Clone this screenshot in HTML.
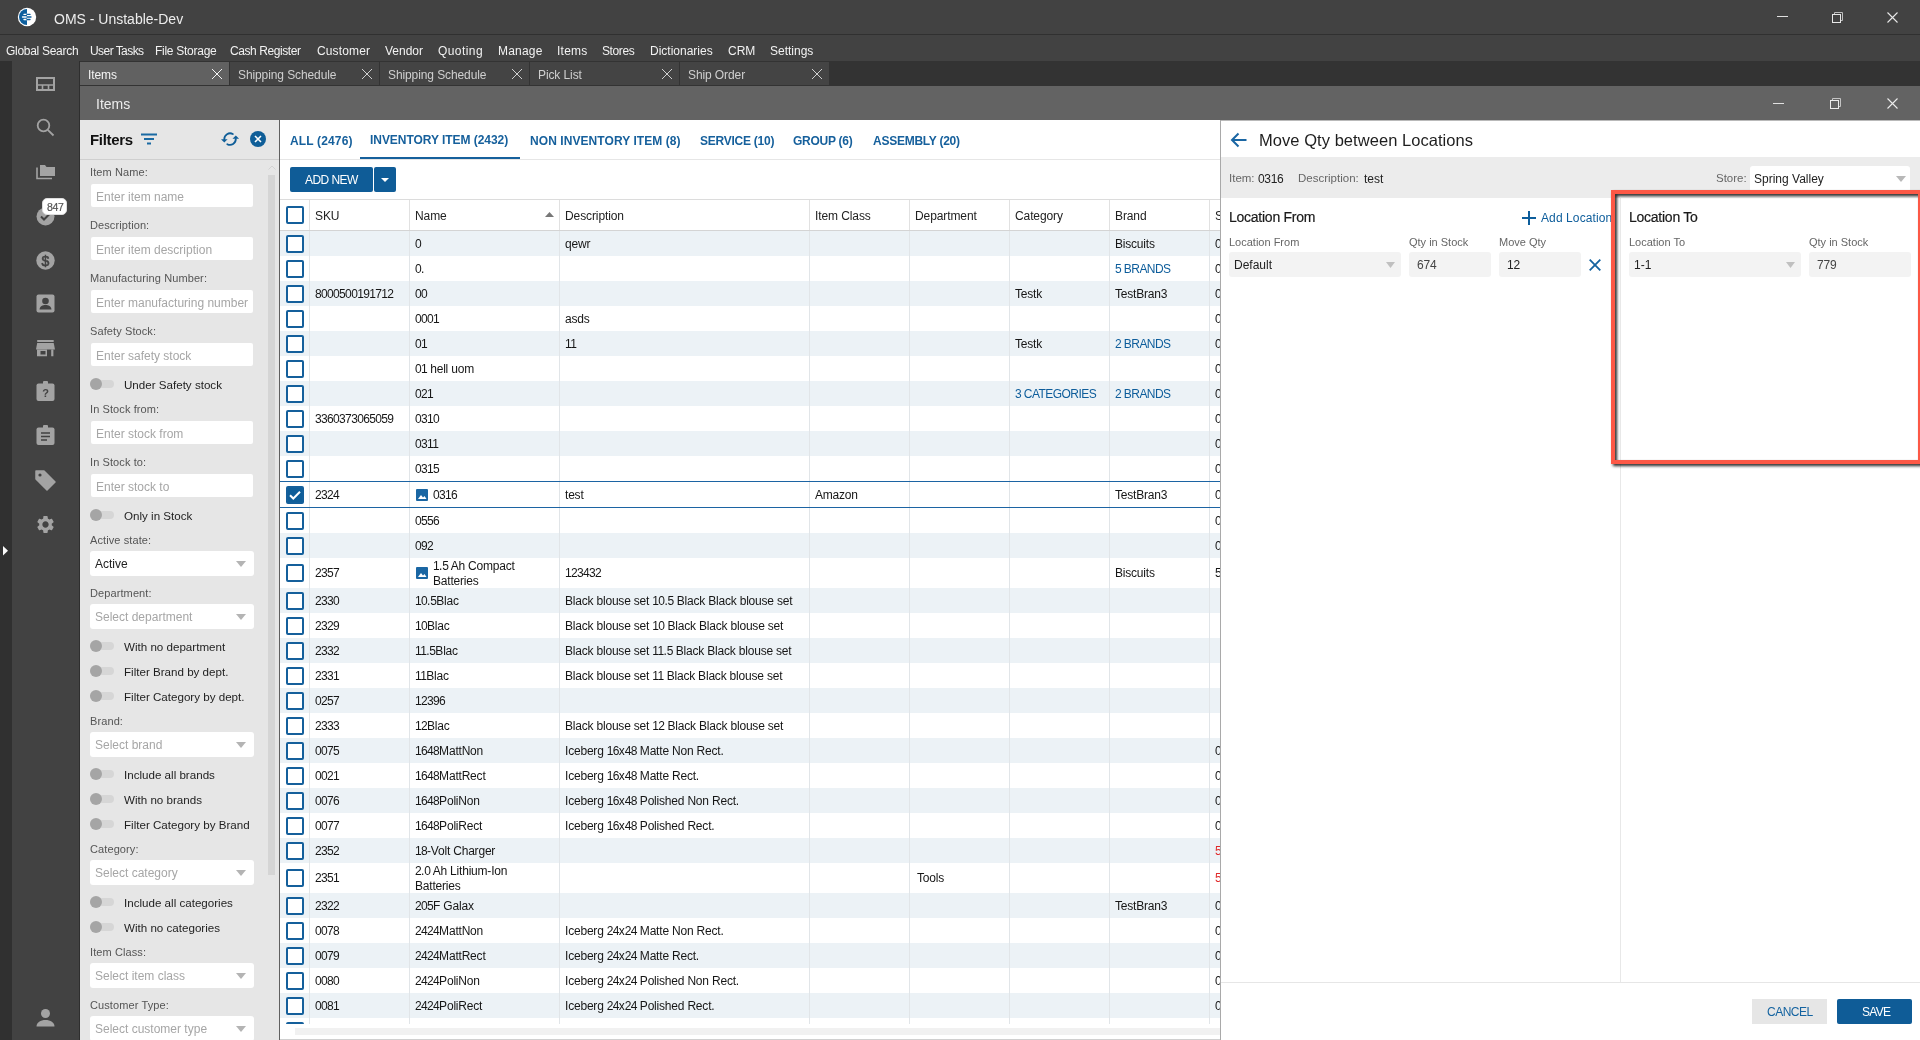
<!DOCTYPE html>
<html><head><meta charset="utf-8"><title>OMS</title>
<style>
*{box-sizing:border-box;margin:0;padding:0}
html,body{width:1920px;height:1040px;overflow:hidden;background:#3f3f3f;font-family:"Liberation Sans", sans-serif;}
.ab{position:absolute}
.t{position:absolute;white-space:nowrap;line-height:1}
svg{position:absolute;overflow:visible}
</style></head><body>
<div style="position:absolute;left:0;top:0;width:1920px;height:1040px;will-change:transform;overflow:hidden">

<div class="ab" style="left:0;top:0;width:1920px;height:34px;background:#424242"></div>
<div class="ab" style="left:0;top:34px;width:1920px;height:1px;background:#303030"></div>
<svg style="left:17px;top:7px" width="20" height="20" viewBox="0 0 20 20">
<circle cx="10" cy="10" r="9.2" fill="#ffffff"/>
<path d="M10 2 A8 8 0 0 0 10 18 Z" fill="#0d5f9e"/>
<path d="M7 7.4h3M7 12.5h3M5.5 10h4.5" stroke="#ffffff" stroke-width="1.3" stroke-linecap="round"/>
<path d="M10 7.4h3M10 12.5h3M10 10h4" stroke="#0d5f9e" stroke-width="1.3" stroke-linecap="round"/>
</svg>
<div class="t" style="left:54px;top:12px;font-size:14px;color:#ededed">OMS - Unstable-Dev</div>
<div class="ab" style="left:1777px;top:16px;width:11px;height:1px;background:#e0e0e0"></div>
<svg style="left:1832px;top:12px" width="11" height="11" viewBox="0 0 11 11">
<path d="M2.5 2.5V0.5h8v8h-2" fill="none" stroke="#bdbdbd" stroke-width="1"/>
<rect x="0.5" y="2.5" width="8" height="8" fill="none" stroke="#e8e8e8" stroke-width="1"/>
</svg>
<svg style="left:1887px;top:12px" width="11" height="11" viewBox="0 0 11 11">
<path d="M0.5 0.5L10.5 10.5M10.5 0.5L0.5 10.5" stroke="#e8e8e8" stroke-width="1.1"/>
</svg>
<div class="ab" style="left:0;top:35px;width:1920px;height:26px;background:#424242"></div>
<div class="t" style="left:6px;top:45px;font-size:12px;color:#f2f2f2;letter-spacing:-0.29px">Global Search</div>
<div class="t" style="left:90px;top:45px;font-size:12px;color:#f2f2f2;letter-spacing:-0.56px">User Tasks</div>
<div class="t" style="left:155px;top:45px;font-size:12px;color:#f2f2f2;letter-spacing:-0.27px">File Storage</div>
<div class="t" style="left:230px;top:45px;font-size:12px;color:#f2f2f2;letter-spacing:-0.42px">Cash Register</div>
<div class="t" style="left:317px;top:45px;font-size:12px;color:#f2f2f2;letter-spacing:0.14px">Customer</div>
<div class="t" style="left:385px;top:45px;font-size:12px;color:#f2f2f2;letter-spacing:0.0px">Vendor</div>
<div class="t" style="left:438px;top:45px;font-size:12px;color:#f2f2f2;letter-spacing:0.42px">Quoting</div>
<div class="t" style="left:498px;top:45px;font-size:12px;color:#f2f2f2;letter-spacing:0.2px">Manage</div>
<div class="t" style="left:557px;top:45px;font-size:12px;color:#f2f2f2;letter-spacing:0.25px">Items</div>
<div class="t" style="left:602px;top:45px;font-size:12px;color:#f2f2f2;letter-spacing:-0.4px">Stores</div>
<div class="t" style="left:650px;top:45px;font-size:12px;color:#f2f2f2;letter-spacing:0.0px">Dictionaries</div>
<div class="t" style="left:728px;top:45px;font-size:12px;color:#f2f2f2;letter-spacing:0.0px">CRM</div>
<div class="t" style="left:770px;top:45px;font-size:12px;color:#f2f2f2;letter-spacing:0.0px">Settings</div>
<div class="ab" style="left:0;top:61px;width:12px;height:979px;background:#303030"></div>
<div class="ab" style="left:12px;top:61px;width:67px;height:979px;background:#424242"></div>
<div class="ab" style="left:79px;top:61px;width:1px;height:979px;background:#2e2e2e"></div>
<svg style="left:3px;top:546px" width="5" height="10" viewBox="0 0 5 10"><path d="M0 0L5 4.8L0 9.6Z" fill="#fafafa"/></svg>
<svg style="left:36px;top:77px" width="19" height="14" viewBox="0 0 19 14">
<rect x="1" y="1" width="17" height="12" fill="none" stroke="#a3a3a3" stroke-width="2"/>
<path d="M1 8h17M6.5 8v5M12.5 8v5" stroke="#a3a3a3" stroke-width="1.6"/>
</svg>
<svg style="left:36px;top:118px" width="19" height="19" viewBox="0 0 19 19">
<circle cx="7.5" cy="7.5" r="5.8" fill="none" stroke="#a3a3a3" stroke-width="1.8"/>
<path d="M11.8 11.8L17.5 17.5" stroke="#a3a3a3" stroke-width="1.8"/>
</svg>
<svg style="left:36px;top:164px" width="19" height="15" viewBox="0 0 19 15">
<path d="M4 1h5l1.5 2H19v9H4z" fill="#a3a3a3"/>
<path d="M1 3.5v11h15" fill="none" stroke="#a3a3a3" stroke-width="1.6"/>
</svg>
<svg style="left:36px;top:207px" width="19" height="19" viewBox="0 0 19 19">
<circle cx="9.5" cy="9.5" r="9" fill="#a3a3a3"/>
<path d="M5 9.5l3 3 6-6" fill="none" stroke="#424242" stroke-width="2"/>
</svg>
<div class="ab" style="left:42px;top:198px;width:25px;height:17px;background:#fff;border-radius:5px;border:1px solid #ddd"></div>
<div class="t" style="left:47px;top:202px;font-size:10.5px;color:#555;letter-spacing:-0.4px;-webkit-text-stroke:0.2px #555">847</div>
<svg style="left:36px;top:251px" width="19" height="19" viewBox="0 0 19 19">
<circle cx="9.5" cy="9.5" r="9.2" fill="#a3a3a3"/>
<text x="9.5" y="14.5" font-family="Liberation Sans" font-size="14" text-anchor="middle" fill="#424242" stroke="#424242" stroke-width="0.6">$</text>
</svg>
<svg style="left:36px;top:294px" width="19" height="19" viewBox="0 0 19 19">
<rect x="0.5" y="0.5" width="18" height="18" rx="2" fill="#a3a3a3"/>
<circle cx="9.5" cy="7" r="3.3" fill="#424242"/>
<path d="M3.5 15.5c0.5-3.5 3-4.5 6-4.5s5.5 1 6 4.5z" fill="#424242"/>
</svg>
<svg style="left:36px;top:340px" width="19" height="17" viewBox="0 0 19 17">
<rect x="1.2" y="0" width="16.5" height="2" fill="#a3a3a3"/>
<path d="M1.2 3h16.5l1.3 6.6H0z" fill="#a3a3a3"/>
<path d="M1 9.6h2.2v6.6H1z M15.2 9.6h2.2v6.6h-2.2z" fill="#a3a3a3"/>
<path d="M3 9.6h8v6.6H3z M4.5 11h5v3.6h-5z" fill="#a3a3a3" fill-rule="evenodd"/>
</svg>
<svg style="left:36px;top:381px" width="19" height="20" viewBox="0 0 19 20">
<rect x="0.5" y="2.5" width="18" height="17.5" rx="2" fill="#a3a3a3"/>
<rect x="7" y="0" width="5" height="4" rx="1" fill="#a3a3a3"/>
<text x="9.5" y="16" font-family="Liberation Sans" font-weight="bold" font-size="11" text-anchor="middle" fill="#424242">?</text>
</svg>
<svg style="left:36px;top:425px" width="19" height="20" viewBox="0 0 19 20">
<rect x="0.5" y="2.5" width="18" height="17.5" rx="2" fill="#a3a3a3"/>
<rect x="7" y="0" width="5" height="4" rx="1" fill="#a3a3a3"/>
<path d="M5 8h9M5 11.5h9M5 15h6" stroke="#424242" stroke-width="1.6"/>
</svg>
<svg style="left:35px;top:470px" width="21" height="21" viewBox="0 0 21 21">
<path d="M1 3V1h8l11 11-8 8L1 9z" fill="#a3a3a3" stroke="#a3a3a3" stroke-linejoin="round" stroke-width="1.5"/>
<circle cx="5" cy="5" r="1.6" fill="#424242"/>
</svg>
<svg style="left:35px;top:514px" width="21" height="21" viewBox="0 0 24 24">
<path fill="#a3a3a3" d="M19.14 12.94c.04-.3.06-.61.06-.94 0-.32-.02-.64-.07-.94l2.03-1.58a.49.49 0 0 0 .12-.61l-1.92-3.32a.488.488 0 0 0-.59-.22l-2.39.96c-.5-.38-1.03-.7-1.62-.94l-.36-2.54a.484.484 0 0 0-.48-.41h-3.84c-.24 0-.43.17-.47.41l-.36 2.54c-.59.24-1.13.57-1.62.94l-2.39-.96c-.22-.08-.47 0-.59.22L2.74 8.87c-.12.21-.08.47.12.61l2.03 1.58c-.05.3-.09.63-.09.94s.2.64.07.94l-2.03 1.58a.49.49 0 0 0-.12.61l1.92 3.32c.12.22.37.29.59.22l2.39-.96c.5.38 1.03.7 1.62.94l.36 2.54c.05.24.24.41.48.41h3.84c.24 0 .44-.17.47-.41l.36-2.54c.59-.24 1.13-.56 1.62-.94l2.39.96c.22.08.47 0 .59-.22l1.92-3.32c.12-.22.07-.47-.12-.61l-2.01-1.58zM12 15.6c-1.98 0-3.6-1.62-3.6-3.6s1.62-3.6 3.6-3.6 3.6 1.62 3.6 3.6-1.62 3.6-3.6 3.6z"/>
</svg>
<svg style="left:36px;top:1009px" width="20" height="19" viewBox="0 0 20 19">
<circle cx="9.5" cy="4.5" r="4.5" fill="#a3a3a3"/>
<path d="M0.5 17.5c0-4 4-6.5 9-6.5s9 2.5 9 6.5z" fill="#a3a3a3"/>
</svg>
<div class="ab" style="left:80px;top:61px;width:1840px;height:25px;background:#333333"></div>
<div class="ab" style="left:80px;top:62px;width:149px;height:23px;background:#616161"></div>
<div class="t" style="left:88px;top:69px;font-size:12px;color:#f4f4f4;letter-spacing:-0.1px">Items</div>
<svg style="left:212px;top:69px" width="10" height="10" viewBox="0 0 10 10"><path d="M0 0L10 10M10 0L0 10" stroke="#f4f4f4" stroke-width="1"/></svg>
<div class="ab" style="left:230px;top:62px;width:149px;height:23px;background:#444444"></div>
<div class="t" style="left:238px;top:69px;font-size:12px;color:#cfcfcf;letter-spacing:-0.1px">Shipping Schedule</div>
<svg style="left:362px;top:69px" width="10" height="10" viewBox="0 0 10 10"><path d="M0 0L10 10M10 0L0 10" stroke="#cfcfcf" stroke-width="1"/></svg>
<div class="ab" style="left:380px;top:62px;width:149px;height:23px;background:#444444"></div>
<div class="t" style="left:388px;top:69px;font-size:12px;color:#cfcfcf;letter-spacing:-0.1px">Shipping Schedule</div>
<svg style="left:512px;top:69px" width="10" height="10" viewBox="0 0 10 10"><path d="M0 0L10 10M10 0L0 10" stroke="#cfcfcf" stroke-width="1"/></svg>
<div class="ab" style="left:530px;top:62px;width:149px;height:23px;background:#444444"></div>
<div class="t" style="left:538px;top:69px;font-size:12px;color:#cfcfcf;letter-spacing:-0.1px">Pick List</div>
<svg style="left:662px;top:69px" width="10" height="10" viewBox="0 0 10 10"><path d="M0 0L10 10M10 0L0 10" stroke="#cfcfcf" stroke-width="1"/></svg>
<div class="ab" style="left:680px;top:62px;width:149px;height:23px;background:#444444"></div>
<div class="t" style="left:688px;top:69px;font-size:12px;color:#cfcfcf;letter-spacing:-0.1px">Ship Order</div>
<svg style="left:812px;top:69px" width="10" height="10" viewBox="0 0 10 10"><path d="M0 0L10 10M10 0L0 10" stroke="#cfcfcf" stroke-width="1"/></svg>
<div class="ab" style="left:80px;top:86px;width:1840px;height:34px;background:#636363"></div>
<div class="t" style="left:96px;top:97px;font-size:14px;color:#ececec">Items</div>
<div class="ab" style="left:1773px;top:103px;width:11px;height:1px;background:#e0e0e0"></div>
<svg style="left:1830px;top:98px" width="11" height="11" viewBox="0 0 11 11">
<path d="M2.5 2.5V0.5h8v8h-2" fill="none" stroke="#c4c4c4" stroke-width="1"/>
<rect x="0.5" y="2.5" width="8" height="8" fill="none" stroke="#ececec" stroke-width="1"/>
</svg>
<svg style="left:1887px;top:98px" width="11" height="11" viewBox="0 0 11 11">
<path d="M0.5 0.5L10.5 10.5M10.5 0.5L0.5 10.5" stroke="#ececec" stroke-width="1.1"/>
</svg>
<div class="ab" style="left:80px;top:120px;width:199px;height:920px;background:#e6e6e6"></div>
<div class="ab" style="left:279px;top:120px;width:1px;height:920px;background:#606060"></div>
<div class="ab" style="left:80px;top:159px;width:199px;height:1px;background:#cfcfcf"></div>
<div class="t" style="left:90px;top:132px;font-size:15px;font-weight:bold;color:#111;letter-spacing:-0.3px">Filters</div>
<svg style="left:141px;top:133px" width="17" height="12" viewBox="0 0 17 12">
<path d="M0 1.5h16M3 6h10M6 10.5h4" stroke="#1a6aa3" stroke-width="2"/>
</svg>
<svg style="left:216px;top:127px" width="28" height="24" viewBox="0 0 28 24">
<path d="M16.8 7 A5.8 5.8 0 0 0 8.3 12.3" fill="none" stroke="#0f5e98" stroke-width="1.8" stroke-linecap="round"/>
<path d="M11.3 17.2 A5.8 5.8 0 0 0 19.8 11.8" fill="none" stroke="#0f5e98" stroke-width="1.8" stroke-linecap="round"/>
<path d="M5 12.3h6.6L8.3 15.6z" fill="#0f5e98"/>
<path d="M16.5 11.8h6.6L19.8 8.5z" fill="#0f5e98"/>
</svg>
<svg style="left:250px;top:131px" width="16" height="16" viewBox="0 0 16 16">
<circle cx="8" cy="8" r="8" fill="#0f5e98"/>
<path d="M5 5L11 11M11 5L5 11" stroke="#fff" stroke-width="1.6"/>
</svg>
<div class="ab" style="left:268px;top:175px;width:7px;height:700px;background:#d5d5d5"></div>
<svg style="left:268px;top:165px" width="8" height="5" viewBox="0 0 8 5"><path d="M0.5 4.5L4 1l3.5 3.5" fill="none" stroke="#d2d2d2" stroke-width="1"/></svg>
<div class="t" style="left:90px;top:167px;font-size:11px;color:#555;letter-spacing:0.1px">Item Name:</div>
<div class="ab" style="left:91px;top:184px;width:162px;height:23px;background:#fff;border-radius:2px"></div>
<div class="t" style="left:96px;top:191px;font-size:12px;color:#a6a6a6">Enter item name</div>
<div class="t" style="left:90px;top:220px;font-size:11px;color:#555;letter-spacing:0.1px">Description:</div>
<div class="ab" style="left:91px;top:237px;width:162px;height:23px;background:#fff;border-radius:2px"></div>
<div class="t" style="left:96px;top:244px;font-size:12px;color:#a6a6a6">Enter item description</div>
<div class="t" style="left:90px;top:273px;font-size:11px;color:#555;letter-spacing:0.1px">Manufacturing Number:</div>
<div class="ab" style="left:91px;top:290px;width:162px;height:23px;background:#fff;border-radius:2px"></div>
<div class="t" style="left:96px;top:297px;font-size:12px;color:#a6a6a6">Enter manufacturing number</div>
<div class="t" style="left:90px;top:326px;font-size:11px;color:#555;letter-spacing:0.1px">Safety Stock:</div>
<div class="ab" style="left:91px;top:343px;width:162px;height:23px;background:#fff;border-radius:2px"></div>
<div class="t" style="left:96px;top:350px;font-size:12px;color:#a6a6a6">Enter safety stock</div>
<div class="ab" style="left:90px;top:380px;width:24px;height:8px;background:#d6d6d6;border-radius:4px"></div>
<div class="ab" style="left:90px;top:378px;width:12px;height:12px;background:#a5a5a5;border-radius:6px"></div>
<div class="t" style="left:124px;top:379px;font-size:11.6px;color:#1e1e1e">Under Safety stock</div>
<div class="t" style="left:90px;top:404px;font-size:11px;color:#555;letter-spacing:0.1px">In Stock from:</div>
<div class="ab" style="left:91px;top:421px;width:162px;height:23px;background:#fff;border-radius:2px"></div>
<div class="t" style="left:96px;top:428px;font-size:12px;color:#a6a6a6">Enter stock from</div>
<div class="t" style="left:90px;top:457px;font-size:11px;color:#555;letter-spacing:0.1px">In Stock to:</div>
<div class="ab" style="left:91px;top:474px;width:162px;height:23px;background:#fff;border-radius:2px"></div>
<div class="t" style="left:96px;top:481px;font-size:12px;color:#a6a6a6">Enter stock to</div>
<div class="ab" style="left:90px;top:511px;width:24px;height:8px;background:#d6d6d6;border-radius:4px"></div>
<div class="ab" style="left:90px;top:509px;width:12px;height:12px;background:#a5a5a5;border-radius:6px"></div>
<div class="t" style="left:124px;top:510px;font-size:11.6px;color:#1e1e1e">Only in Stock</div>
<div class="t" style="left:90px;top:535px;font-size:11px;color:#555;letter-spacing:0.1px">Active state:</div>
<div class="ab" style="left:90px;top:551px;width:164px;height:25px;background:#fff;border-radius:3px"></div>
<div class="t" style="left:95px;top:558px;font-size:12px;color:#222">Active</div>
<svg style="left:236px;top:561px" width="10" height="6" viewBox="0 0 10 6"><path d="M0 0h10L5 6z" fill="#b4b4b4"/></svg>
<div class="t" style="left:90px;top:588px;font-size:11px;color:#555;letter-spacing:0.1px">Department:</div>
<div class="ab" style="left:90px;top:604px;width:164px;height:25px;background:#fff;border-radius:3px"></div>
<div class="t" style="left:95px;top:611px;font-size:12px;color:#a6a6a6">Select department</div>
<svg style="left:236px;top:614px" width="10" height="6" viewBox="0 0 10 6"><path d="M0 0h10L5 6z" fill="#b4b4b4"/></svg>
<div class="ab" style="left:90px;top:642px;width:24px;height:8px;background:#d6d6d6;border-radius:4px"></div>
<div class="ab" style="left:90px;top:640px;width:12px;height:12px;background:#a5a5a5;border-radius:6px"></div>
<div class="t" style="left:124px;top:641px;font-size:11.6px;color:#1e1e1e">With no department</div>
<div class="ab" style="left:90px;top:667px;width:24px;height:8px;background:#d6d6d6;border-radius:4px"></div>
<div class="ab" style="left:90px;top:665px;width:12px;height:12px;background:#a5a5a5;border-radius:6px"></div>
<div class="t" style="left:124px;top:666px;font-size:11.6px;color:#1e1e1e">Filter Brand by dept.</div>
<div class="ab" style="left:90px;top:692px;width:24px;height:8px;background:#d6d6d6;border-radius:4px"></div>
<div class="ab" style="left:90px;top:690px;width:12px;height:12px;background:#a5a5a5;border-radius:6px"></div>
<div class="t" style="left:124px;top:691px;font-size:11.6px;color:#1e1e1e">Filter Category by dept.</div>
<div class="t" style="left:90px;top:716px;font-size:11px;color:#555;letter-spacing:0.1px">Brand:</div>
<div class="ab" style="left:90px;top:732px;width:164px;height:25px;background:#fff;border-radius:3px"></div>
<div class="t" style="left:95px;top:739px;font-size:12px;color:#a6a6a6">Select brand</div>
<svg style="left:236px;top:742px" width="10" height="6" viewBox="0 0 10 6"><path d="M0 0h10L5 6z" fill="#b4b4b4"/></svg>
<div class="ab" style="left:90px;top:770px;width:24px;height:8px;background:#d6d6d6;border-radius:4px"></div>
<div class="ab" style="left:90px;top:768px;width:12px;height:12px;background:#a5a5a5;border-radius:6px"></div>
<div class="t" style="left:124px;top:769px;font-size:11.6px;color:#1e1e1e">Include all brands</div>
<div class="ab" style="left:90px;top:795px;width:24px;height:8px;background:#d6d6d6;border-radius:4px"></div>
<div class="ab" style="left:90px;top:793px;width:12px;height:12px;background:#a5a5a5;border-radius:6px"></div>
<div class="t" style="left:124px;top:794px;font-size:11.6px;color:#1e1e1e">With no brands</div>
<div class="ab" style="left:90px;top:820px;width:24px;height:8px;background:#d6d6d6;border-radius:4px"></div>
<div class="ab" style="left:90px;top:818px;width:12px;height:12px;background:#a5a5a5;border-radius:6px"></div>
<div class="t" style="left:124px;top:819px;font-size:11.6px;color:#1e1e1e">Filter Category by Brand</div>
<div class="t" style="left:90px;top:844px;font-size:11px;color:#555;letter-spacing:0.1px">Category:</div>
<div class="ab" style="left:90px;top:860px;width:164px;height:25px;background:#fff;border-radius:3px"></div>
<div class="t" style="left:95px;top:867px;font-size:12px;color:#a6a6a6">Select category</div>
<svg style="left:236px;top:870px" width="10" height="6" viewBox="0 0 10 6"><path d="M0 0h10L5 6z" fill="#b4b4b4"/></svg>
<div class="ab" style="left:90px;top:898px;width:24px;height:8px;background:#d6d6d6;border-radius:4px"></div>
<div class="ab" style="left:90px;top:896px;width:12px;height:12px;background:#a5a5a5;border-radius:6px"></div>
<div class="t" style="left:124px;top:897px;font-size:11.6px;color:#1e1e1e">Include all categories</div>
<div class="ab" style="left:90px;top:923px;width:24px;height:8px;background:#d6d6d6;border-radius:4px"></div>
<div class="ab" style="left:90px;top:921px;width:12px;height:12px;background:#a5a5a5;border-radius:6px"></div>
<div class="t" style="left:124px;top:922px;font-size:11.6px;color:#1e1e1e">With no categories</div>
<div class="t" style="left:90px;top:947px;font-size:11px;color:#555;letter-spacing:0.1px">Item Class:</div>
<div class="ab" style="left:90px;top:963px;width:164px;height:25px;background:#fff;border-radius:3px"></div>
<div class="t" style="left:95px;top:970px;font-size:12px;color:#a6a6a6">Select item class</div>
<svg style="left:236px;top:973px" width="10" height="6" viewBox="0 0 10 6"><path d="M0 0h10L5 6z" fill="#b4b4b4"/></svg>
<div class="t" style="left:90px;top:1000px;font-size:11px;color:#555;letter-spacing:0.1px">Customer Type:</div>
<div class="ab" style="left:90px;top:1016px;width:164px;height:25px;background:#fff;border-radius:3px"></div>
<div class="t" style="left:95px;top:1023px;font-size:12px;color:#a6a6a6">Select customer type</div>
<svg style="left:236px;top:1026px" width="10" height="6" viewBox="0 0 10 6"><path d="M0 0h10L5 6z" fill="#b4b4b4"/></svg>
<div class="ab" style="left:280px;top:120px;width:940px;height:920px;background:#fff"></div>
<div class="t" style="left:290px;top:135px;font-size:12px;font-weight:bold;color:#16609c;letter-spacing:0.15px">ALL (2476)</div>
<div class="t" style="left:370px;top:134px;font-size:12px;font-weight:bold;color:#16609c;letter-spacing:-0.05px">INVENTORY ITEM (2432)</div>
<div class="t" style="left:530px;top:135px;font-size:12px;font-weight:bold;color:#16609c;letter-spacing:0.07px">NON INVENTORY ITEM (8)</div>
<div class="t" style="left:700px;top:135px;font-size:12px;font-weight:bold;color:#16609c;letter-spacing:-0.25px">SERVICE (10)</div>
<div class="t" style="left:793px;top:135px;font-size:12px;font-weight:bold;color:#16609c;letter-spacing:-0.25px">GROUP (6)</div>
<div class="t" style="left:873px;top:135px;font-size:12px;font-weight:bold;color:#16609c;letter-spacing:-0.25px">ASSEMBLY (20)</div>
<div class="ab" style="left:360px;top:157px;width:160px;height:2px;background:#16609c"></div>
<div class="ab" style="left:280px;top:159px;width:940px;height:1px;background:#e6e6e6"></div>
<div class="ab" style="left:290px;top:167px;width:83px;height:25px;background:#0f5c97;border-radius:2px"></div>
<div class="ab" style="left:374px;top:167px;width:22px;height:25px;background:#0f5c97;border-radius:2px"></div>
<div class="t" style="left:305px;top:174px;font-size:12px;color:#fff;letter-spacing:-0.55px">ADD NEW</div>
<svg style="left:381px;top:178px" width="8" height="4" viewBox="0 0 8 4"><path d="M0 0h8L4 4z" fill="#fff"/></svg>
<div class="ab" style="left:280px;top:199px;width:940px;height:1px;background:#dcdcdc"></div>
<div class="ab" style="left:280px;top:230px;width:940px;height:1px;background:#d4d4d4"></div>
<div class="ab" style="left:286px;top:206px;width:18px;height:18px;border:2px solid #145f9b;border-radius:2px;background:#fff"></div>
<div class="t" style="left:315px;top:210px;font-size:12px;color:#222;letter-spacing:-0.1px">SKU</div>
<div class="t" style="left:415px;top:210px;font-size:12px;color:#222;letter-spacing:-0.1px">Name</div>
<div class="t" style="left:565px;top:210px;font-size:12px;color:#222;letter-spacing:-0.1px">Description</div>
<div class="t" style="left:815px;top:210px;font-size:12px;color:#222;letter-spacing:-0.1px">Item Class</div>
<div class="t" style="left:915px;top:210px;font-size:12px;color:#222;letter-spacing:-0.1px">Department</div>
<div class="t" style="left:1015px;top:210px;font-size:12px;color:#222;letter-spacing:-0.1px">Category</div>
<div class="t" style="left:1115px;top:210px;font-size:12px;color:#222;letter-spacing:-0.1px">Brand</div>
<div class="t" style="left:1215px;top:210px;font-size:12px;color:#222;letter-spacing:-0.1px">S</div>
<svg style="left:545px;top:212px" width="9" height="5" viewBox="0 0 9 5"><path d="M0 5h9L4.5 0z" fill="#777"/></svg>
<div class="ab" style="left:280px;top:231px;width:940px;height:793px;overflow:hidden">
<div class="ab" style="left:0;top:0px;width:940px;height:25px;background:#ecf2f6"></div>
<div class="ab" style="left:6px;top:4px;width:18px;height:18px;border:2px solid #145f9b;border-radius:2px;background:#fff"></div>
<div class="t" style="left:135px;top:6.5px;font-size:12px;color:#161616;letter-spacing:-0.2px"><span style="letter-spacing:-0.65px">0</span></div>
<div class="t" style="left:285px;top:6.5px;font-size:12px;color:#161616;letter-spacing:-0.2px">qewr</div>
<div class="t" style="left:835px;top:6.5px;font-size:12px;color:#161616;letter-spacing:-0.2px">Biscuits</div>
<div class="t" style="left:935px;top:6.5px;font-size:12px;color:#161616;letter-spacing:-0.2px"><span style="letter-spacing:-0.65px">0</span></div>
<div class="ab" style="left:0;top:25px;width:940px;height:25px;background:#fff"></div>
<div class="ab" style="left:6px;top:29px;width:18px;height:18px;border:2px solid #145f9b;border-radius:2px;background:#fff"></div>
<div class="t" style="left:135px;top:31.5px;font-size:12px;color:#161616;letter-spacing:-0.2px"><span style="letter-spacing:-0.65px">0</span>.</div>
<div class="t" style="left:835px;top:31.5px;font-size:12px;color:#0d5d9b;letter-spacing:-0.55px"><span style="letter-spacing:-0.65px">5</span> BRANDS</div>
<div class="t" style="left:935px;top:31.5px;font-size:12px;color:#161616;letter-spacing:-0.2px"><span style="letter-spacing:-0.65px">0</span></div>
<div class="ab" style="left:0;top:50px;width:940px;height:25px;background:#ecf2f6"></div>
<div class="ab" style="left:6px;top:54px;width:18px;height:18px;border:2px solid #145f9b;border-radius:2px;background:#fff"></div>
<div class="t" style="left:35px;top:56.5px;font-size:12px;color:#161616;letter-spacing:-0.2px"><span style="letter-spacing:-0.65px">8000500191712</span></div>
<div class="t" style="left:135px;top:56.5px;font-size:12px;color:#161616;letter-spacing:-0.2px"><span style="letter-spacing:-0.65px">00</span></div>
<div class="t" style="left:735px;top:56.5px;font-size:12px;color:#161616;letter-spacing:-0.2px">Testk</div>
<div class="t" style="left:835px;top:56.5px;font-size:12px;color:#161616;letter-spacing:-0.2px">TestBran<span style="letter-spacing:-0.65px">3</span></div>
<div class="t" style="left:935px;top:56.5px;font-size:12px;color:#161616;letter-spacing:-0.2px"><span style="letter-spacing:-0.65px">0</span></div>
<div class="ab" style="left:0;top:75px;width:940px;height:25px;background:#fff"></div>
<div class="ab" style="left:6px;top:79px;width:18px;height:18px;border:2px solid #145f9b;border-radius:2px;background:#fff"></div>
<div class="t" style="left:135px;top:81.5px;font-size:12px;color:#161616;letter-spacing:-0.2px"><span style="letter-spacing:-0.65px">0001</span></div>
<div class="t" style="left:285px;top:81.5px;font-size:12px;color:#161616;letter-spacing:-0.2px">asds</div>
<div class="t" style="left:935px;top:81.5px;font-size:12px;color:#161616;letter-spacing:-0.2px"><span style="letter-spacing:-0.65px">0</span></div>
<div class="ab" style="left:0;top:100px;width:940px;height:25px;background:#ecf2f6"></div>
<div class="ab" style="left:6px;top:104px;width:18px;height:18px;border:2px solid #145f9b;border-radius:2px;background:#fff"></div>
<div class="t" style="left:135px;top:106.5px;font-size:12px;color:#161616;letter-spacing:-0.2px"><span style="letter-spacing:-0.65px">01</span></div>
<div class="t" style="left:285px;top:106.5px;font-size:12px;color:#161616;letter-spacing:-0.2px"><span style="letter-spacing:-0.65px">11</span></div>
<div class="t" style="left:735px;top:106.5px;font-size:12px;color:#161616;letter-spacing:-0.2px">Testk</div>
<div class="t" style="left:835px;top:106.5px;font-size:12px;color:#0d5d9b;letter-spacing:-0.55px"><span style="letter-spacing:-0.65px">2</span> BRANDS</div>
<div class="t" style="left:935px;top:106.5px;font-size:12px;color:#161616;letter-spacing:-0.2px"><span style="letter-spacing:-0.65px">0</span></div>
<div class="ab" style="left:0;top:125px;width:940px;height:25px;background:#fff"></div>
<div class="ab" style="left:6px;top:129px;width:18px;height:18px;border:2px solid #145f9b;border-radius:2px;background:#fff"></div>
<div class="t" style="left:135px;top:131.5px;font-size:12px;color:#161616;letter-spacing:-0.2px"><span style="letter-spacing:-0.65px">01</span> hell uom</div>
<div class="t" style="left:935px;top:131.5px;font-size:12px;color:#161616;letter-spacing:-0.2px"><span style="letter-spacing:-0.65px">0</span></div>
<div class="ab" style="left:0;top:150px;width:940px;height:25px;background:#ecf2f6"></div>
<div class="ab" style="left:6px;top:154px;width:18px;height:18px;border:2px solid #145f9b;border-radius:2px;background:#fff"></div>
<div class="t" style="left:135px;top:156.5px;font-size:12px;color:#161616;letter-spacing:-0.2px"><span style="letter-spacing:-0.65px">021</span></div>
<div class="t" style="left:735px;top:156.5px;font-size:12px;color:#0d5d9b;letter-spacing:-0.55px"><span style="letter-spacing:-0.65px">3</span> CATEGORIES</div>
<div class="t" style="left:835px;top:156.5px;font-size:12px;color:#0d5d9b;letter-spacing:-0.55px"><span style="letter-spacing:-0.65px">2</span> BRANDS</div>
<div class="t" style="left:935px;top:156.5px;font-size:12px;color:#161616;letter-spacing:-0.2px"><span style="letter-spacing:-0.65px">0</span></div>
<div class="ab" style="left:0;top:175px;width:940px;height:25px;background:#fff"></div>
<div class="ab" style="left:6px;top:179px;width:18px;height:18px;border:2px solid #145f9b;border-radius:2px;background:#fff"></div>
<div class="t" style="left:35px;top:181.5px;font-size:12px;color:#161616;letter-spacing:-0.2px"><span style="letter-spacing:-0.65px">3360373065059</span></div>
<div class="t" style="left:135px;top:181.5px;font-size:12px;color:#161616;letter-spacing:-0.2px"><span style="letter-spacing:-0.65px">0310</span></div>
<div class="t" style="left:935px;top:181.5px;font-size:12px;color:#161616;letter-spacing:-0.2px"><span style="letter-spacing:-0.65px">0</span></div>
<div class="ab" style="left:0;top:200px;width:940px;height:25px;background:#ecf2f6"></div>
<div class="ab" style="left:6px;top:204px;width:18px;height:18px;border:2px solid #145f9b;border-radius:2px;background:#fff"></div>
<div class="t" style="left:135px;top:206.5px;font-size:12px;color:#161616;letter-spacing:-0.2px"><span style="letter-spacing:-0.65px">0311</span></div>
<div class="t" style="left:935px;top:206.5px;font-size:12px;color:#161616;letter-spacing:-0.2px"><span style="letter-spacing:-0.65px">0</span></div>
<div class="ab" style="left:0;top:225px;width:940px;height:25px;background:#fff"></div>
<div class="ab" style="left:6px;top:229px;width:18px;height:18px;border:2px solid #145f9b;border-radius:2px;background:#fff"></div>
<div class="t" style="left:135px;top:231.5px;font-size:12px;color:#161616;letter-spacing:-0.2px"><span style="letter-spacing:-0.65px">0315</span></div>
<div class="t" style="left:935px;top:231.5px;font-size:12px;color:#161616;letter-spacing:-0.2px"><span style="letter-spacing:-0.65px">0</span></div>
<div class="ab" style="left:0;top:250px;width:940px;height:27px;background:#fff"></div>
<div class="ab" style="left:0;top:250px;width:940px;height:1px;background:#1c64a3;z-index:2"></div>
<div class="ab" style="left:0;top:276px;width:940px;height:1px;background:#1c64a3;z-index:2"></div>
<div class="ab" style="left:6px;top:255px;width:18px;height:18px;border:2px solid #145f9b;border-radius:2px;background:#0f5e99"></div>
<svg style="left:6px;top:255px" width="18" height="18" viewBox="0 0 18 18"><path d="M4 9.2l3.3 3.3L14 5.8" fill="none" stroke="#fff" stroke-width="2"/></svg>
<div class="t" style="left:35px;top:257.5px;font-size:12px;color:#161616;letter-spacing:-0.2px"><span style="letter-spacing:-0.65px">2324</span></div>
<svg style="left:136px;top:258px" width="12" height="12" viewBox="0 0 12 12"><rect width="12" height="12" rx="1" fill="#1a66a3"/><path d="M2 10l3-4 2 2.5 1.5-1.5L10.5 10z" fill="#fff"/></svg>
<div class="t" style="left:153px;top:257.5px;font-size:12px;color:#161616;letter-spacing:-0.2px"><span style="letter-spacing:-0.65px">0316</span></div>
<div class="t" style="left:285px;top:257.5px;font-size:12px;color:#161616;letter-spacing:-0.2px">test</div>
<div class="t" style="left:535px;top:257.5px;font-size:12px;color:#161616;letter-spacing:-0.2px">Amazon</div>
<div class="t" style="left:835px;top:257.5px;font-size:12px;color:#161616;letter-spacing:-0.2px">TestBran<span style="letter-spacing:-0.65px">3</span></div>
<div class="t" style="left:935px;top:257.5px;font-size:12px;color:#161616;letter-spacing:-0.2px"><span style="letter-spacing:-0.65px">0</span></div>
<div class="ab" style="left:0;top:277px;width:940px;height:25px;background:#fff"></div>
<div class="ab" style="left:6px;top:281px;width:18px;height:18px;border:2px solid #145f9b;border-radius:2px;background:#fff"></div>
<div class="t" style="left:135px;top:283.5px;font-size:12px;color:#161616;letter-spacing:-0.2px"><span style="letter-spacing:-0.65px">0556</span></div>
<div class="t" style="left:935px;top:283.5px;font-size:12px;color:#161616;letter-spacing:-0.2px"><span style="letter-spacing:-0.65px">0</span></div>
<div class="ab" style="left:0;top:302px;width:940px;height:25px;background:#ecf2f6"></div>
<div class="ab" style="left:6px;top:306px;width:18px;height:18px;border:2px solid #145f9b;border-radius:2px;background:#fff"></div>
<div class="t" style="left:135px;top:308.5px;font-size:12px;color:#161616;letter-spacing:-0.2px"><span style="letter-spacing:-0.65px">092</span></div>
<div class="t" style="left:935px;top:308.5px;font-size:12px;color:#161616;letter-spacing:-0.2px"><span style="letter-spacing:-0.65px">0</span></div>
<div class="ab" style="left:0;top:327px;width:940px;height:30px;background:#fff"></div>
<div class="ab" style="left:6px;top:333px;width:18px;height:18px;border:2px solid #145f9b;border-radius:2px;background:#fff"></div>
<div class="t" style="left:35px;top:336.0px;font-size:12px;color:#161616;letter-spacing:-0.2px"><span style="letter-spacing:-0.65px">2357</span></div>
<svg style="left:136px;top:336px" width="12" height="12" viewBox="0 0 12 12"><rect width="12" height="12" rx="1" fill="#1a66a3"/><path d="M2 10l3-4 2 2.5 1.5-1.5L10.5 10z" fill="#fff"/></svg>
<div class="t" style="left:153px;top:328.5px;font-size:12px;color:#161616;letter-spacing:-0.2px"><span style="letter-spacing:-0.65px">1</span>.<span style="letter-spacing:-0.65px">5</span> Ah Compact</div>
<div class="t" style="left:153px;top:343.5px;font-size:12px;color:#161616;letter-spacing:-0.2px">Batteries</div>
<div class="t" style="left:285px;top:336.0px;font-size:12px;color:#161616;letter-spacing:-0.2px"><span style="letter-spacing:-0.65px">123432</span></div>
<div class="t" style="left:835px;top:336.0px;font-size:12px;color:#161616;letter-spacing:-0.2px">Biscuits</div>
<div class="t" style="left:935px;top:336.0px;font-size:12px;color:#161616;letter-spacing:-0.2px"><span style="letter-spacing:-0.65px">5</span></div>
<div class="ab" style="left:0;top:357px;width:940px;height:25px;background:#ecf2f6"></div>
<div class="ab" style="left:6px;top:361px;width:18px;height:18px;border:2px solid #145f9b;border-radius:2px;background:#fff"></div>
<div class="t" style="left:35px;top:363.5px;font-size:12px;color:#161616;letter-spacing:-0.2px"><span style="letter-spacing:-0.65px">2330</span></div>
<div class="t" style="left:135px;top:363.5px;font-size:12px;color:#161616;letter-spacing:-0.2px"><span style="letter-spacing:-0.65px">10</span>.<span style="letter-spacing:-0.65px">5</span>Blac</div>
<div class="t" style="left:285px;top:363.5px;font-size:12px;color:#161616;letter-spacing:-0.2px">Black blouse set <span style="letter-spacing:-0.65px">10</span>.<span style="letter-spacing:-0.65px">5</span> Black Black blouse set</div>
<div class="ab" style="left:0;top:382px;width:940px;height:25px;background:#fff"></div>
<div class="ab" style="left:6px;top:386px;width:18px;height:18px;border:2px solid #145f9b;border-radius:2px;background:#fff"></div>
<div class="t" style="left:35px;top:388.5px;font-size:12px;color:#161616;letter-spacing:-0.2px"><span style="letter-spacing:-0.65px">2329</span></div>
<div class="t" style="left:135px;top:388.5px;font-size:12px;color:#161616;letter-spacing:-0.2px"><span style="letter-spacing:-0.65px">10</span>Blac</div>
<div class="t" style="left:285px;top:388.5px;font-size:12px;color:#161616;letter-spacing:-0.2px">Black blouse set <span style="letter-spacing:-0.65px">10</span> Black Black blouse set</div>
<div class="ab" style="left:0;top:407px;width:940px;height:25px;background:#ecf2f6"></div>
<div class="ab" style="left:6px;top:411px;width:18px;height:18px;border:2px solid #145f9b;border-radius:2px;background:#fff"></div>
<div class="t" style="left:35px;top:413.5px;font-size:12px;color:#161616;letter-spacing:-0.2px"><span style="letter-spacing:-0.65px">2332</span></div>
<div class="t" style="left:135px;top:413.5px;font-size:12px;color:#161616;letter-spacing:-0.2px"><span style="letter-spacing:-0.65px">11</span>.<span style="letter-spacing:-0.65px">5</span>Blac</div>
<div class="t" style="left:285px;top:413.5px;font-size:12px;color:#161616;letter-spacing:-0.2px">Black blouse set <span style="letter-spacing:-0.65px">11</span>.<span style="letter-spacing:-0.65px">5</span> Black Black blouse set</div>
<div class="ab" style="left:0;top:432px;width:940px;height:25px;background:#fff"></div>
<div class="ab" style="left:6px;top:436px;width:18px;height:18px;border:2px solid #145f9b;border-radius:2px;background:#fff"></div>
<div class="t" style="left:35px;top:438.5px;font-size:12px;color:#161616;letter-spacing:-0.2px"><span style="letter-spacing:-0.65px">2331</span></div>
<div class="t" style="left:135px;top:438.5px;font-size:12px;color:#161616;letter-spacing:-0.2px"><span style="letter-spacing:-0.65px">11</span>Blac</div>
<div class="t" style="left:285px;top:438.5px;font-size:12px;color:#161616;letter-spacing:-0.2px">Black blouse set <span style="letter-spacing:-0.65px">11</span> Black Black blouse set</div>
<div class="ab" style="left:0;top:457px;width:940px;height:25px;background:#ecf2f6"></div>
<div class="ab" style="left:6px;top:461px;width:18px;height:18px;border:2px solid #145f9b;border-radius:2px;background:#fff"></div>
<div class="t" style="left:35px;top:463.5px;font-size:12px;color:#161616;letter-spacing:-0.2px"><span style="letter-spacing:-0.65px">0257</span></div>
<div class="t" style="left:135px;top:463.5px;font-size:12px;color:#161616;letter-spacing:-0.2px"><span style="letter-spacing:-0.65px">12396</span></div>
<div class="ab" style="left:0;top:482px;width:940px;height:25px;background:#fff"></div>
<div class="ab" style="left:6px;top:486px;width:18px;height:18px;border:2px solid #145f9b;border-radius:2px;background:#fff"></div>
<div class="t" style="left:35px;top:488.5px;font-size:12px;color:#161616;letter-spacing:-0.2px"><span style="letter-spacing:-0.65px">2333</span></div>
<div class="t" style="left:135px;top:488.5px;font-size:12px;color:#161616;letter-spacing:-0.2px"><span style="letter-spacing:-0.65px">12</span>Blac</div>
<div class="t" style="left:285px;top:488.5px;font-size:12px;color:#161616;letter-spacing:-0.2px">Black blouse set <span style="letter-spacing:-0.65px">12</span> Black Black blouse set</div>
<div class="ab" style="left:0;top:507px;width:940px;height:25px;background:#ecf2f6"></div>
<div class="ab" style="left:6px;top:511px;width:18px;height:18px;border:2px solid #145f9b;border-radius:2px;background:#fff"></div>
<div class="t" style="left:35px;top:513.5px;font-size:12px;color:#161616;letter-spacing:-0.2px"><span style="letter-spacing:-0.65px">0075</span></div>
<div class="t" style="left:135px;top:513.5px;font-size:12px;color:#161616;letter-spacing:-0.2px"><span style="letter-spacing:-0.65px">1648</span>MattNon</div>
<div class="t" style="left:285px;top:513.5px;font-size:12px;color:#161616;letter-spacing:-0.2px">Iceberg <span style="letter-spacing:-0.65px">16</span>x<span style="letter-spacing:-0.65px">48</span> Matte Non Rect.</div>
<div class="t" style="left:935px;top:513.5px;font-size:12px;color:#161616;letter-spacing:-0.2px"><span style="letter-spacing:-0.65px">0</span></div>
<div class="ab" style="left:0;top:532px;width:940px;height:25px;background:#fff"></div>
<div class="ab" style="left:6px;top:536px;width:18px;height:18px;border:2px solid #145f9b;border-radius:2px;background:#fff"></div>
<div class="t" style="left:35px;top:538.5px;font-size:12px;color:#161616;letter-spacing:-0.2px"><span style="letter-spacing:-0.65px">0021</span></div>
<div class="t" style="left:135px;top:538.5px;font-size:12px;color:#161616;letter-spacing:-0.2px"><span style="letter-spacing:-0.65px">1648</span>MattRect</div>
<div class="t" style="left:285px;top:538.5px;font-size:12px;color:#161616;letter-spacing:-0.2px">Iceberg <span style="letter-spacing:-0.65px">16</span>x<span style="letter-spacing:-0.65px">48</span> Matte Rect.</div>
<div class="t" style="left:935px;top:538.5px;font-size:12px;color:#161616;letter-spacing:-0.2px"><span style="letter-spacing:-0.65px">0</span></div>
<div class="ab" style="left:0;top:557px;width:940px;height:25px;background:#ecf2f6"></div>
<div class="ab" style="left:6px;top:561px;width:18px;height:18px;border:2px solid #145f9b;border-radius:2px;background:#fff"></div>
<div class="t" style="left:35px;top:563.5px;font-size:12px;color:#161616;letter-spacing:-0.2px"><span style="letter-spacing:-0.65px">0076</span></div>
<div class="t" style="left:135px;top:563.5px;font-size:12px;color:#161616;letter-spacing:-0.2px"><span style="letter-spacing:-0.65px">1648</span>PoliNon</div>
<div class="t" style="left:285px;top:563.5px;font-size:12px;color:#161616;letter-spacing:-0.2px">Iceberg <span style="letter-spacing:-0.65px">16</span>x<span style="letter-spacing:-0.65px">48</span> Polished Non Rect.</div>
<div class="t" style="left:935px;top:563.5px;font-size:12px;color:#161616;letter-spacing:-0.2px"><span style="letter-spacing:-0.65px">0</span></div>
<div class="ab" style="left:0;top:582px;width:940px;height:25px;background:#fff"></div>
<div class="ab" style="left:6px;top:586px;width:18px;height:18px;border:2px solid #145f9b;border-radius:2px;background:#fff"></div>
<div class="t" style="left:35px;top:588.5px;font-size:12px;color:#161616;letter-spacing:-0.2px"><span style="letter-spacing:-0.65px">0077</span></div>
<div class="t" style="left:135px;top:588.5px;font-size:12px;color:#161616;letter-spacing:-0.2px"><span style="letter-spacing:-0.65px">1648</span>PoliRect</div>
<div class="t" style="left:285px;top:588.5px;font-size:12px;color:#161616;letter-spacing:-0.2px">Iceberg <span style="letter-spacing:-0.65px">16</span>x<span style="letter-spacing:-0.65px">48</span> Polished Rect.</div>
<div class="t" style="left:935px;top:588.5px;font-size:12px;color:#161616;letter-spacing:-0.2px"><span style="letter-spacing:-0.65px">0</span></div>
<div class="ab" style="left:0;top:607px;width:940px;height:25px;background:#ecf2f6"></div>
<div class="ab" style="left:6px;top:611px;width:18px;height:18px;border:2px solid #145f9b;border-radius:2px;background:#fff"></div>
<div class="t" style="left:35px;top:613.5px;font-size:12px;color:#161616;letter-spacing:-0.2px"><span style="letter-spacing:-0.65px">2352</span></div>
<div class="t" style="left:135px;top:613.5px;font-size:12px;color:#161616;letter-spacing:-0.2px"><span style="letter-spacing:-0.65px">18</span>-Volt Charger</div>
<div class="t" style="left:935px;top:613.5px;font-size:12px;color:#e02a2a;letter-spacing:-0.2px"><span style="letter-spacing:-0.65px">5</span></div>
<div class="ab" style="left:0;top:632px;width:940px;height:30px;background:#fff"></div>
<div class="ab" style="left:6px;top:638px;width:18px;height:18px;border:2px solid #145f9b;border-radius:2px;background:#fff"></div>
<div class="t" style="left:35px;top:641.0px;font-size:12px;color:#161616;letter-spacing:-0.2px"><span style="letter-spacing:-0.65px">2351</span></div>
<div class="t" style="left:135px;top:633.5px;font-size:12px;color:#161616;letter-spacing:-0.2px"><span style="letter-spacing:-0.65px">2</span>.<span style="letter-spacing:-0.65px">0</span> Ah Lithium-Ion</div>
<div class="t" style="left:135px;top:648.5px;font-size:12px;color:#161616;letter-spacing:-0.2px">Batteries</div>
<div class="t" style="left:637px;top:641.0px;font-size:12px;color:#161616;letter-spacing:-0.2px">Tools</div>
<div class="t" style="left:935px;top:641.0px;font-size:12px;color:#e02a2a;letter-spacing:-0.2px"><span style="letter-spacing:-0.65px">5</span></div>
<div class="ab" style="left:0;top:662px;width:940px;height:25px;background:#ecf2f6"></div>
<div class="ab" style="left:6px;top:666px;width:18px;height:18px;border:2px solid #145f9b;border-radius:2px;background:#fff"></div>
<div class="t" style="left:35px;top:668.5px;font-size:12px;color:#161616;letter-spacing:-0.2px"><span style="letter-spacing:-0.65px">2322</span></div>
<div class="t" style="left:135px;top:668.5px;font-size:12px;color:#161616;letter-spacing:-0.2px"><span style="letter-spacing:-0.65px">205</span>F Galax</div>
<div class="t" style="left:835px;top:668.5px;font-size:12px;color:#161616;letter-spacing:-0.2px">TestBran<span style="letter-spacing:-0.65px">3</span></div>
<div class="t" style="left:935px;top:668.5px;font-size:12px;color:#161616;letter-spacing:-0.2px"><span style="letter-spacing:-0.65px">0</span></div>
<div class="ab" style="left:0;top:687px;width:940px;height:25px;background:#fff"></div>
<div class="ab" style="left:6px;top:691px;width:18px;height:18px;border:2px solid #145f9b;border-radius:2px;background:#fff"></div>
<div class="t" style="left:35px;top:693.5px;font-size:12px;color:#161616;letter-spacing:-0.2px"><span style="letter-spacing:-0.65px">0078</span></div>
<div class="t" style="left:135px;top:693.5px;font-size:12px;color:#161616;letter-spacing:-0.2px"><span style="letter-spacing:-0.65px">2424</span>MattNon</div>
<div class="t" style="left:285px;top:693.5px;font-size:12px;color:#161616;letter-spacing:-0.2px">Iceberg <span style="letter-spacing:-0.65px">24</span>x<span style="letter-spacing:-0.65px">24</span> Matte Non Rect.</div>
<div class="t" style="left:935px;top:693.5px;font-size:12px;color:#161616;letter-spacing:-0.2px"><span style="letter-spacing:-0.65px">0</span></div>
<div class="ab" style="left:0;top:712px;width:940px;height:25px;background:#ecf2f6"></div>
<div class="ab" style="left:6px;top:716px;width:18px;height:18px;border:2px solid #145f9b;border-radius:2px;background:#fff"></div>
<div class="t" style="left:35px;top:718.5px;font-size:12px;color:#161616;letter-spacing:-0.2px"><span style="letter-spacing:-0.65px">0079</span></div>
<div class="t" style="left:135px;top:718.5px;font-size:12px;color:#161616;letter-spacing:-0.2px"><span style="letter-spacing:-0.65px">2424</span>MattRect</div>
<div class="t" style="left:285px;top:718.5px;font-size:12px;color:#161616;letter-spacing:-0.2px">Iceberg <span style="letter-spacing:-0.65px">24</span>x<span style="letter-spacing:-0.65px">24</span> Matte Rect.</div>
<div class="t" style="left:935px;top:718.5px;font-size:12px;color:#161616;letter-spacing:-0.2px"><span style="letter-spacing:-0.65px">0</span></div>
<div class="ab" style="left:0;top:737px;width:940px;height:25px;background:#fff"></div>
<div class="ab" style="left:6px;top:741px;width:18px;height:18px;border:2px solid #145f9b;border-radius:2px;background:#fff"></div>
<div class="t" style="left:35px;top:743.5px;font-size:12px;color:#161616;letter-spacing:-0.2px"><span style="letter-spacing:-0.65px">0080</span></div>
<div class="t" style="left:135px;top:743.5px;font-size:12px;color:#161616;letter-spacing:-0.2px"><span style="letter-spacing:-0.65px">2424</span>PoliNon</div>
<div class="t" style="left:285px;top:743.5px;font-size:12px;color:#161616;letter-spacing:-0.2px">Iceberg <span style="letter-spacing:-0.65px">24</span>x<span style="letter-spacing:-0.65px">24</span> Polished Non Rect.</div>
<div class="t" style="left:935px;top:743.5px;font-size:12px;color:#161616;letter-spacing:-0.2px"><span style="letter-spacing:-0.65px">0</span></div>
<div class="ab" style="left:0;top:762px;width:940px;height:25px;background:#ecf2f6"></div>
<div class="ab" style="left:6px;top:766px;width:18px;height:18px;border:2px solid #145f9b;border-radius:2px;background:#fff"></div>
<div class="t" style="left:35px;top:768.5px;font-size:12px;color:#161616;letter-spacing:-0.2px"><span style="letter-spacing:-0.65px">0081</span></div>
<div class="t" style="left:135px;top:768.5px;font-size:12px;color:#161616;letter-spacing:-0.2px"><span style="letter-spacing:-0.65px">2424</span>PoliRect</div>
<div class="t" style="left:285px;top:768.5px;font-size:12px;color:#161616;letter-spacing:-0.2px">Iceberg <span style="letter-spacing:-0.65px">24</span>x<span style="letter-spacing:-0.65px">24</span> Polished Rect.</div>
<div class="t" style="left:935px;top:768.5px;font-size:12px;color:#161616;letter-spacing:-0.2px"><span style="letter-spacing:-0.65px">0</span></div>
<div class="ab" style="left:0;top:787px;width:940px;height:25px;background:#fff"></div>
<div class="ab" style="left:6px;top:791px;width:18px;height:18px;border:2px solid #145f9b;border-radius:2px;background:#fff"></div>
<div class="ab" style="left:29px;top:0;width:1px;height:793px;background:#e1e5e8"></div>
<div class="ab" style="left:129px;top:0;width:1px;height:793px;background:#e1e5e8"></div>
<div class="ab" style="left:279px;top:0;width:1px;height:793px;background:#e1e5e8"></div>
<div class="ab" style="left:529px;top:0;width:1px;height:793px;background:#e1e5e8"></div>
<div class="ab" style="left:629px;top:0;width:1px;height:793px;background:#e1e5e8"></div>
<div class="ab" style="left:729px;top:0;width:1px;height:793px;background:#e1e5e8"></div>
<div class="ab" style="left:829px;top:0;width:1px;height:793px;background:#e1e5e8"></div>
<div class="ab" style="left:929px;top:0;width:1px;height:793px;background:#e1e5e8"></div>
</div>
<div class="ab" style="left:309px;top:200px;width:1px;height:30px;background:#e1e1e1"></div>
<div class="ab" style="left:409px;top:200px;width:1px;height:30px;background:#e1e1e1"></div>
<div class="ab" style="left:559px;top:200px;width:1px;height:30px;background:#e1e1e1"></div>
<div class="ab" style="left:809px;top:200px;width:1px;height:30px;background:#e1e1e1"></div>
<div class="ab" style="left:909px;top:200px;width:1px;height:30px;background:#e1e1e1"></div>
<div class="ab" style="left:1009px;top:200px;width:1px;height:30px;background:#e1e1e1"></div>
<div class="ab" style="left:1109px;top:200px;width:1px;height:30px;background:#e1e1e1"></div>
<div class="ab" style="left:1209px;top:200px;width:1px;height:30px;background:#e1e1e1"></div>
<div class="ab" style="left:295px;top:1028px;width:925px;height:7px;background:#f1f1f1"></div>
<div class="ab" style="left:280px;top:1039px;width:940px;height:1px;background:#cfcfcf"></div>
<div class="ab" style="left:1220px;top:120px;width:1px;height:920px;background:#a9a9a9"></div>
<div class="ab" style="left:1221px;top:120px;width:699px;height:920px;background:#fff"></div>
<div class="ab" style="left:1221px;top:120px;width:699px;height:1px;background:#b9b9b9"></div>
<svg style="left:1230px;top:132px" width="17" height="16" viewBox="0 0 17 16">
<path d="M16.5 8H2.5M8.5 1.5L2 8l6.5 6.5" fill="none" stroke="#1a66a3" stroke-width="2"/>
</svg>
<div class="t" style="left:1259px;top:132px;font-size:16.5px;color:#1e1e1e;letter-spacing:0.05px">Move Qty between Locations</div>
<div class="ab" style="left:1221px;top:157px;width:699px;height:41px;background:#ececec"></div>
<div class="t" style="left:1229px;top:173px;font-size:11.5px;color:#666">Item:</div>
<div class="t" style="left:1258px;top:173px;font-size:12px;color:#222;letter-spacing:-0.3px">0316</div>
<div class="t" style="left:1298px;top:173px;font-size:11.5px;color:#666">Description:</div>
<div class="t" style="left:1364px;top:173px;font-size:12px;color:#222">test</div>
<div class="t" style="left:1716px;top:173px;font-size:11.5px;color:#666">Store:</div>
<div class="ab" style="left:1750px;top:166px;width:160px;height:26px;background:#fff;border-radius:3px"></div>
<div class="t" style="left:1754px;top:173px;font-size:12px;color:#222">Spring Valley</div>
<svg style="left:1896px;top:176px" width="10" height="6" viewBox="0 0 10 6"><path d="M0 0h10L5 6z" fill="#b8b8b8"/></svg>
<div class="t" style="left:1229px;top:210px;font-size:14px;color:#1a1a1a;letter-spacing:-0.25px;-webkit-text-stroke:0.2px #1a1a1a">Location From</div>
<svg style="left:1522px;top:211px" width="14" height="14" viewBox="0 0 14 14"><path d="M7 0v14M0 7h14" stroke="#0d5d9b" stroke-width="2"/></svg>
<div class="t" style="left:1541px;top:212px;font-size:12px;color:#0d5d9b;letter-spacing:0.1px">Add Location</div>
<div class="t" style="left:1229px;top:237px;font-size:11px;color:#666">Location From</div>
<div class="t" style="left:1409px;top:237px;font-size:11px;color:#666">Qty in Stock</div>
<div class="t" style="left:1499px;top:237px;font-size:11px;color:#666">Move Qty</div>
<div class="ab" style="left:1229px;top:252px;width:172px;height:25px;background:#f3f3f3;border-radius:3px"></div>
<div class="t" style="left:1234px;top:259px;font-size:12px;color:#222">Default</div>
<svg style="left:1386px;top:262px" width="9" height="6" viewBox="0 0 9 6"><path d="M0 0h9L4.5 6z" fill="#c0c0c0"/></svg>
<div class="ab" style="left:1409px;top:252px;width:82px;height:25px;background:#f3f3f3;border-radius:3px"></div>
<div class="t" style="left:1417px;top:259px;font-size:12px;color:#444;letter-spacing:-0.2px">674</div>
<div class="ab" style="left:1499px;top:252px;width:82px;height:25px;background:#f3f3f3;border-radius:3px"></div>
<div class="t" style="left:1507px;top:259px;font-size:12px;color:#222;letter-spacing:-0.2px">12</div>
<svg style="left:1589px;top:259px" width="12" height="12" viewBox="0 0 12 12"><path d="M0.7 0.7L11.3 11.3M11.3 0.7L0.7 11.3" stroke="#1463a0" stroke-width="1.8"/></svg>
<div class="ab" style="left:1620px;top:198px;width:1px;height:784px;background:#e8e8e8"></div>
<div class="t" style="left:1629px;top:210px;font-size:14px;color:#1a1a1a;letter-spacing:-0.25px;-webkit-text-stroke:0.2px #1a1a1a">Location To</div>
<div class="t" style="left:1629px;top:237px;font-size:11px;color:#666">Location To</div>
<div class="t" style="left:1809px;top:237px;font-size:11px;color:#666">Qty in Stock</div>
<div class="ab" style="left:1629px;top:252px;width:172px;height:25px;background:#f3f3f3;border-radius:3px"></div>
<div class="t" style="left:1634px;top:259px;font-size:12px;color:#222">1-1</div>
<svg style="left:1786px;top:262px" width="9" height="6" viewBox="0 0 9 6"><path d="M0 0h9L4.5 6z" fill="#c0c0c0"/></svg>
<div class="ab" style="left:1809px;top:252px;width:102px;height:25px;background:#f3f3f3;border-radius:3px"></div>
<div class="t" style="left:1817px;top:259px;font-size:12px;color:#444;letter-spacing:-0.2px">779</div>
<div class="ab" style="left:1221px;top:982px;width:699px;height:1px;background:#e6e6e6"></div>
<div class="ab" style="left:1752px;top:999px;width:75px;height:25px;background:#e6e6e6"></div>
<div class="t" style="left:1767px;top:1006px;font-size:12px;color:#1463a0;letter-spacing:-0.5px">CANCEL</div>
<div class="ab" style="left:1837px;top:999px;width:75px;height:25px;background:#0f5c97;border-radius:2px"></div>
<div class="t" style="left:1862px;top:1006px;font-size:12px;color:#fff;letter-spacing:-0.7px">SAVE</div>
<div class="ab" style="left:1611px;top:190px;width:311px;height:274px;border:4px solid #fd5846;filter:drop-shadow(2px 2px 1.5px rgba(0,0,0,0.85))"></div>
</div></body></html>
